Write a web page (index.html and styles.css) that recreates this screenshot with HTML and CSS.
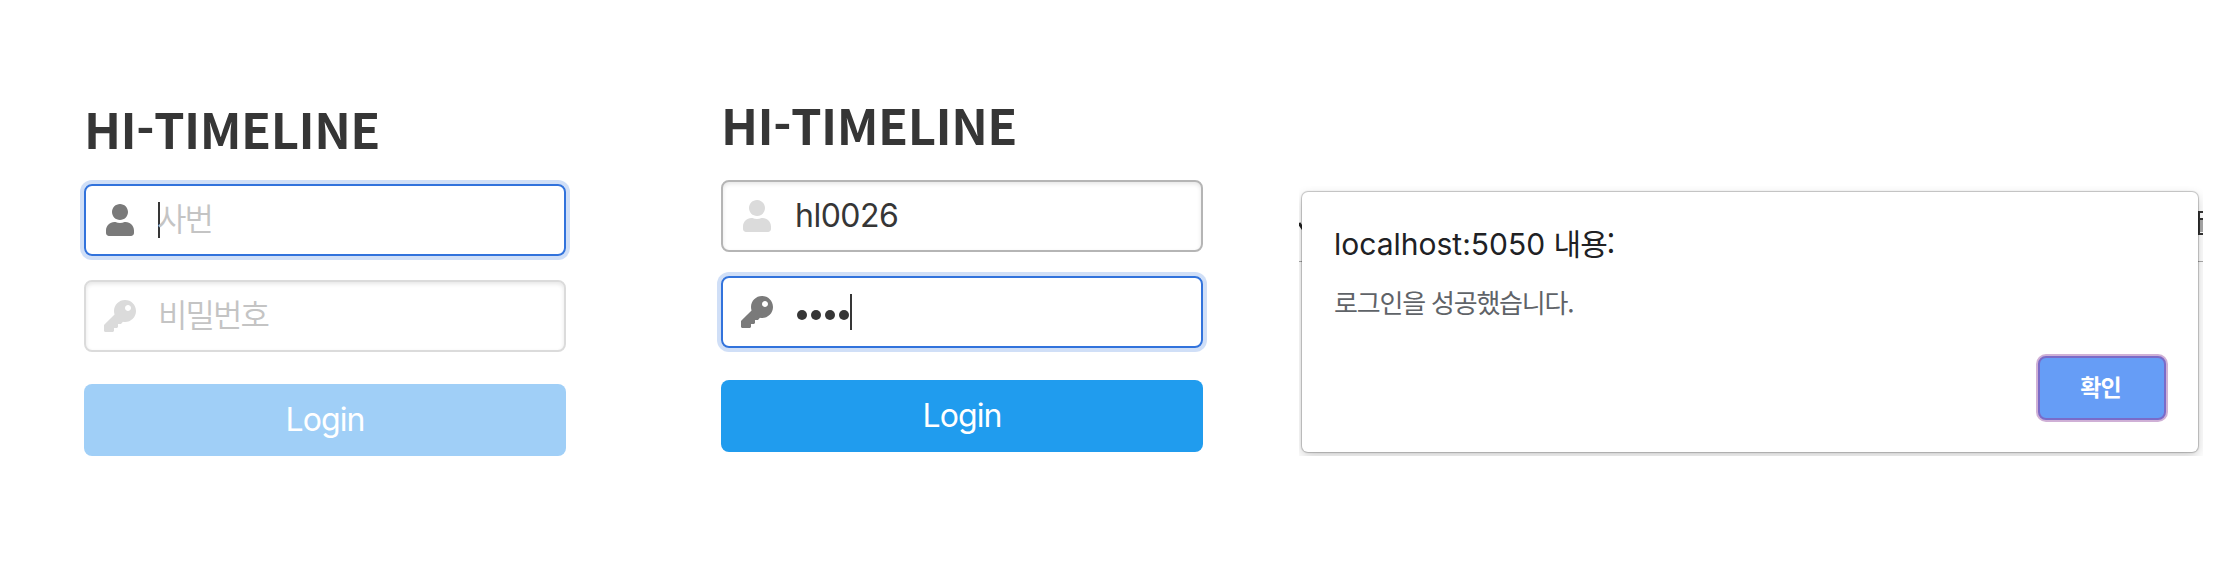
FILE: index.html
```html
<!DOCTYPE html>
<html lang="ko">
<head>
<meta charset="utf-8">
<title>HI-TIMELINE</title>
<link rel="stylesheet" href="styles.css">
</head>
<body>
<svg class="defs" width="0" height="0" aria-hidden="true">
  <symbol id="user" viewBox="0 0 448 512"><path d="M224 256c70.7 0 128-57.3 128-128S294.7 0 224 0 96 57.3 96 128s57.3 128 128 128zm89.6 32h-16.7c-22.2 10.2-46.9 16-72.9 16s-50.6-5.8-72.9-16h-16.7C60.2 288 0 348.2 0 422.4V464c0 26.5 21.5 48 48 48h352c26.5 0 48-21.5 48-48v-41.6c0-74.2-60.2-134.4-134.4-134.4z"/></symbol>
  <symbol id="key" viewBox="0 0 512 512"><path d="M512 176.001C512 273.203 433.202 352 336 352c-11.22 0-22.19-1.062-32.827-3.069l-24.012 27.014A23.999 23.999 0 0 1 261.223 384H224v40c0 13.255-10.745 24-24 24h-40v40c0 13.255-10.745 24-24 24H24c-13.255 0-24-10.745-24-24v-78.059c0-6.365 2.529-12.47 7.029-16.971l161.802-161.802C163.108 213.814 160 195.271 160 176 160 78.798 238.797.001 335.999 0 433.488-.001 512 78.511 512 176.001zM336 128c0 26.51 21.49 48 48 48s48-21.49 48-48-21.49-48-48-48-48 21.49-48 48z"/></symbol>
</svg>
<main class="page">
  <section class="login login-empty">
    <h1 class="title">HI-TIMELINE</h1>
    <div class="field focused">
      <span class="icon"><svg width="28" height="32"><use href="#user"/></svg></span>
      <span class="caret"></span><span class="placeholder">사번</span>
    </div>
    <div class="field">
      <span class="icon"><svg width="32" height="32"><use href="#key"/></svg></span>
      <span class="placeholder">비밀번호</span>
    </div>
    <button class="submit disabled">Login</button>
  </section>
  <section class="login login-filled">
    <h1 class="title">HI-TIMELINE</h1>
    <div class="field hovered">
      <span class="icon"><svg width="28" height="32"><use href="#user"/></svg></span>
      <span class="value">hl0026</span>
    </div>
    <div class="field focused">
      <span class="icon"><svg width="32" height="32"><use href="#key"/></svg></span>
      <span class="dots"><i></i><i></i><i></i><i></i></span><span class="caret"></span>
    </div>
    <button class="submit">Login</button>
  </section>
  <section class="stage">
    <svg class="behind" width="904" height="270" aria-hidden="true">
      <path d="M0 37l4 6" stroke="#222" stroke-width="3"/>
      <path d="M0 75.500H904" stroke="#aaa"/>
      <path d="M900 34h4v12h-4z" fill="#aaa"/>
      <path d="M904 26h-4v22h4M900 33h4" stroke="#333" stroke-width="2" fill="none"/>
    </svg>
    <div class="dialog">
      <div class="dialog-title">localhost:5050 <span class="ko">내용:</span></div>
      <div class="dialog-text">로그인을 성공했습니다.</div>
      <button class="confirm">확인</button>
    </div>
  </section>
</main>
</body>
</html>
```
FILE: styles.css
```css
* { box-sizing: border-box; }
body { margin: 0; background: #fff; font-family: Inter, "Noto Sans CJK KR", sans-serif; }
button { border: 0; padding: 0; font-family: inherit; }
.defs { display: block; }
.page { display: flex; align-items: flex-start; height: 572px; overflow: hidden; }
.login { width: 482px; display: flex; flex-direction: column; }
.login-empty { margin: 98px 0 0 84px; }
.login-filled { margin: 94px 0 0 155px; }
.title {
  margin: 0 0 26px;
  height: 60px;
  font: 700 49px/59px "Noto Sans CJK KR", sans-serif;
  letter-spacing: -.5px;
  color: #363636;
  white-space: nowrap;
}
.field {
  height: 72px;
  margin-bottom: 24px;
  border: 2px solid #dbdbdb;
  border-radius: 8px;
  display: flex;
  align-items: center;
  box-shadow: inset 0 2px 4px rgba(10, 10, 10, .1);
  color: #dbdbdb;
  font-size: 32px;
}
.hovered { border-color: #b5b5b5; }
.focused { border-color: #3273dc; box-shadow: 0 0 0 4px rgba(50, 115, 220, .23); color: #7a7a7a; }
.icon { width: 72px; padding-right: 4px; display: flex; justify-content: center; flex: none; }
.icon svg { fill: currentColor; }
.caret { width: 2px; height: 36px; background: #363636; margin-right: -2px; }
.placeholder { height: 68px; font: 350 32px/63px "Noto Sans CJK KR", sans-serif; letter-spacing: -1.9px; color: #c4c4c4; }
.focused .placeholder { margin-left: -1px; }
.value { color: #363636; line-height: 68px; letter-spacing: -.5px; }
.dots { display: flex; gap: 4px; padding: 5px 1px 0 2px; }
.dots i { width: 10px; height: 10px; border-radius: 50%; background: #363636; }
.submit { margin-top: 8px; height: 72px; border-radius: 8px; background: #209cee; color: #fff; font-size: 32px; line-height: 72px; letter-spacing: -.9px; }
.disabled { background: #a0cff7; }
.stage { position: relative; width: 904px; height: 270px; margin: 186px 0 0 96px; padding: 6px 5px 4px 3px; overflow: hidden; }
.behind { position: absolute; left: 0; top: 0; }
.dialog {
  position: relative;
  width: 896px;
  height: 260px;
  padding: 29px 32px 32px 32px;
  display: flex;
  flex-direction: column;
  background: #fff;
  border-radius: 6px;
  box-shadow: 0 0 1px 1px rgba(0, 0, 0, .22), 0 4px 12px rgba(0, 0, 0, .2);
}
.dialog-title { height: 44px; font-size: 30px; line-height: 43px; color: #202124; white-space: nowrap; }
.ko { font-family: "Noto Sans CJK KR", sans-serif; letter-spacing: -1px; }
.dialog-text { height: 36px; margin-top: 19px; font: 400 26px/36px "Noto Sans CJK KR", sans-serif; letter-spacing: -1.2px; color: #5f6368; }
.confirm {
  align-self: flex-end;
  width: 128px;
  height: 64px;
  margin-top: 36px;
  padding: 0 3px 4px 0;
  border: 2px solid #7a6bc8;
  border-radius: 8px;
  background: #669df6;
  box-shadow: 0 0 0 2px #cfb0d6;
  color: #fff;
  font: 700 23px/56px "Noto Sans CJK KR", sans-serif;
  letter-spacing: -1px;
}
```
